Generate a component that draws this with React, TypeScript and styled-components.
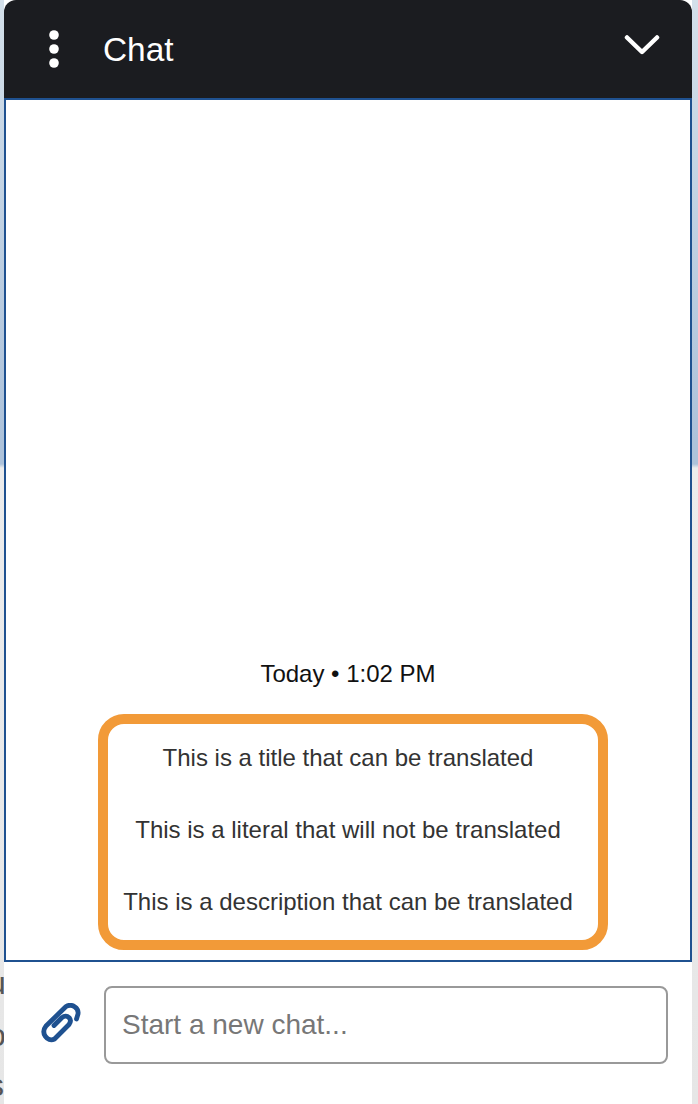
import React from "react";
import styled, { createGlobalStyle } from "styled-components";

const GlobalStyle = createGlobalStyle`
  html, body {
    margin: 0;
    padding: 0;
    background: #ececec;
  }
  * {
    box-sizing: border-box;
  }
`;

const Page = styled.div`
  position: relative;
  width: 698px;
  height: 1104px;
  overflow: hidden;
  padding: 0 6px 0 4px;
  background: linear-gradient(
    to bottom,
    #d4e0ea 0,
    #adc2da 440px,
    #adc2da 464px,
    #ececec 468px,
    #e6e6e6 100%
  );
  font-family: "Liberation Sans", Arial, sans-serif;
`;

const BehindGlyph = styled.span<{ $top: number }>`
  position: absolute;
  left: -12px;
  top: ${({ $top }) => $top}px;
  font-size: 32px;
  line-height: 34px;
  color: #555;
`;

const ChatPanel = styled.div`
  position: relative;
  display: flex;
  flex-direction: column;
  height: 100%;
  background: #fff;
`;

const Header = styled.header`
  display: flex;
  align-items: center;
  height: 98px;
  padding: 0 32px 0 44px;
  background: #1b1c20;
  border-radius: 12px 12px 0 0;
`;

const MenuButton = styled.button`
  display: flex;
  padding: 0;
  border: 0;
  background: none;
  margin-right: 43px;
`;

const Title = styled.h1`
  flex: 1;
  margin: 2px 0 0;
  font-size: 33.4px;
  font-weight: 400;
  line-height: 40px;
  color: #fff;
`;

const CollapseButton = styled.button`
  display: flex;
  padding: 0;
  margin-bottom: 9px;
  border: 0;
  background: none;
`;

const Messages = styled.main`
  flex: 1;
  display: flex;
  flex-direction: column;
  justify-content: flex-end;
  align-items: center;
  padding-bottom: 10px;
  border: 2px solid #1f5190;
`;

const Timestamp = styled.div`
  margin-bottom: 25px;
  font-size: 24px;
  line-height: 30px;
  color: #111;
`;

const Card = styled.section`
  display: flex;
  flex-direction: column;
  gap: 44px;
  align-items: center;
  width: 510px;
  margin-left: 10px;
  padding: 20px 10px 24px 0;
  border: 10px solid #f29a38;
  border-radius: 26px;
`;

const CardLine = styled.p`
  margin: 0;
  font-size: 24px;
  line-height: 28px;
  white-space: nowrap;
  color: #333;
`;

const Composer = styled.footer`
  display: flex;
  align-items: flex-start;
  height: 142px;
  padding: 24px 24px 0 37px;
  background: #fff;
`;

const AttachButton = styled.button`
  display: flex;
  flex: none;
  width: 63px;
  padding: 17px 0 0;
  border: 0;
  background: none;
`;

const ChatInput = styled.input`
  flex: 1;
  min-width: 0;
  height: 78px;
  padding: 0 16px;
  border: 2px solid #999;
  border-radius: 8px;
  background: #fff;
  font-family: inherit;
  font-size: 28px;

  &::placeholder {
    color: #777;
    opacity: 1;
  }
`;

export default function App() {
  return (
    <>
      <GlobalStyle />
      <Page>
        <BehindGlyph $top={583}>t</BehindGlyph>
        <BehindGlyph $top={966}>u</BehindGlyph>
        <BehindGlyph $top={1018}>o</BehindGlyph>
        <BehindGlyph $top={1068}>s</BehindGlyph>
        <ChatPanel>
          <Header>
            <MenuButton aria-label="Menu">
              <svg width="12" height="38" viewBox="0 0 12 38" fill="#fff">
                <circle cx="6" cy="5" r="4.8" />
                <circle cx="6" cy="19" r="4.8" />
                <circle cx="6" cy="33" r="4.8" />
              </svg>
            </MenuButton>
            <Title>Chat</Title>
            <CollapseButton aria-label="Collapse">
              <svg width="36" height="22" viewBox="0 0 36 22" fill="none">
                <path
                  d="M3 3.5 L18 18 L33 3.5"
                  stroke="#fff"
                  strokeWidth="4.5"
                  strokeLinecap="round"
                  strokeLinejoin="round"
                />
              </svg>
            </CollapseButton>
          </Header>
          <Messages>
            <Timestamp>Today • 1:02 PM</Timestamp>
            <Card>
              <CardLine>This is a title that can be translated</CardLine>
              <CardLine>This is a literal that will not be translated</CardLine>
              <CardLine>This is a description that can be translated</CardLine>
            </Card>
          </Messages>
          <Composer>
            <AttachButton aria-label="Attach file">
              <svg width="40" height="40" viewBox="0 0 40 40" fill="none">
                <path
                  d="M35.5 16 L37 11 C38 5 31 0 25 3.5 L5 23 C-0.5 30 6 39.5 13.5 36 L28 21.5 C32 16 26 10.5 21 14.5 L13 22.5"
                  stroke="#1f5190"
                  strokeWidth="4.8"
                  strokeLinecap="round"
                  strokeLinejoin="round"
                />
              </svg>
            </AttachButton>
            <ChatInput placeholder="Start a new chat..." />
          </Composer>
        </ChatPanel>
      </Page>
    </>
  );
}
